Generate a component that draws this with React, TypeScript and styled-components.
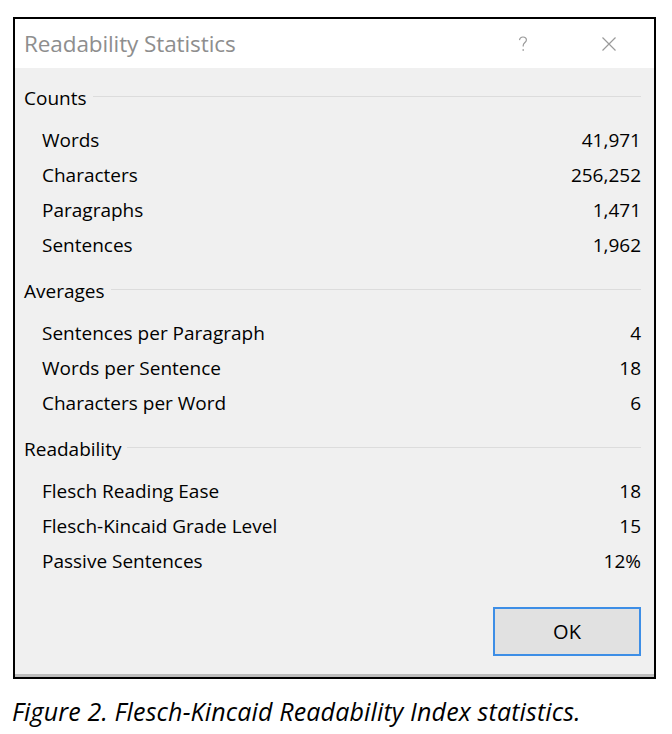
import React from 'react';
import styled, { createGlobalStyle } from 'styled-components';

const GlobalStyle = createGlobalStyle`
  html, body {
    margin: 0;
    padding: 0;
    background: #ffffff;
  }
`;

const Page = styled.div`
  width: 672px;
  height: 734px;
  padding: 17px 0 0 13px;
  box-sizing: border-box;
  font-family: "Open Sans", "Noto Sans", sans-serif;
`;

const Dialog = styled.div`
  width: 643px;
  border: 2px solid #000000;
  box-sizing: border-box;
  background: #f0f0f0;
`;

const TitleBar = styled.div`
  height: 49px;
  display: flex;
  align-items: center;
  padding: 0 0 0 9px;
  background: #ffffff;
`;

const Title = styled.div`
  flex: 1;
  font-size: 22.5px;
  color: #8e8e8e;
  letter-spacing: -0.1px;
`;

const TitleButton = styled.div<{ $w: number }>`
  width: ${(p) => p.$w}px;
  height: 49px;
  display: flex;
  align-items: center;
  justify-content: center;
  color: #9a9a9a;
`;

const Body = styled.div`
  padding: 12px 13px 18px 9px;
  border-bottom: 3px solid #bdbdbd;
  display: flex;
  flex-direction: column;
`;

const Group = styled.section`
  display: flex;
  flex-direction: column;
  margin-bottom: 11px;
`;

const GroupHeader = styled.div`
  display: flex;
  align-items: center;
  height: 35px;
  margin-bottom: 7px;
  font-size: 19px;
  color: #000000;

  &::after {
    content: '';
    flex: 1;
    height: 1px;
    margin-left: 6px;
    margin-top: -3px;
    background: #dcdcdc;
  }
`;

const Row = styled.div`
  display: flex;
  align-items: center;
  justify-content: space-between;
  height: 35px;
  padding-left: 18px;
  font-size: 19px;
  color: #000000;
`;

const Footer = styled.div`
  display: flex;
  justify-content: flex-end;
  margin-top: 18px;
`;

const OkButton = styled.button`
  width: 148px;
  height: 49px;
  border: 2px solid #3d8ee6;
  background: #e1e1e1;
  font-family: "Open Sans", "Noto Sans", sans-serif;
  font-size: 20px;
  color: #000000;
  padding: 0;
`;

const Caption = styled.div`
  margin-top: 15px;
  margin-left: -1px;
  font-family: "Open Sans", "Noto Sans", sans-serif;
  font-style: italic;
  font-size: 25px;
  letter-spacing: 0.15px;
  color: #000000;
`;

const groups = [
  {
    name: 'Counts',
    rows: [
      ['Words', '41,971'],
      ['Characters', '256,252'],
      ['Paragraphs', '1,471'],
      ['Sentences', '1,962'],
    ],
  },
  {
    name: 'Averages',
    rows: [
      ['Sentences per Paragraph', '4'],
      ['Words per Sentence', '18'],
      ['Characters per Word', '6'],
    ],
  },
  {
    name: 'Readability',
    rows: [
      ['Flesch Reading Ease', '18'],
      ['Flesch-Kincaid Grade Level', '15'],
      ['Passive Sentences', '12%'],
    ],
  },
];

export default function App() {
  return (
    <>
      <GlobalStyle />
      <Page>
        <Dialog>
          <TitleBar>
            <Title>Readability Statistics</Title>
            <TitleButton $w={82}>
              <svg width="10" height="16" viewBox="0 0 10 16">
                <path d="M1.5 4.2 C1.8 2 3.3 1 5 1 C7 1 8.4 2.3 8.4 4 C8.4 6.2 5.2 6.8 5.2 9.4 V10.6" fill="none" stroke="#9a9a9a" strokeWidth="1.2" />
                <rect x="4.5" y="13.2" width="1.4" height="1.6" fill="#9a9a9a" />
              </svg>
            </TitleButton>
            <TitleButton $w={90}>
              <svg width="14" height="14" viewBox="0 0 14 14">
                <path d="M0.5 0.5 L13.5 13.5 M13.5 0.5 L0.5 13.5" stroke="#9a9a9a" strokeWidth="1.2" />
              </svg>
            </TitleButton>
          </TitleBar>
          <Body>
            {groups.map((g) => (
              <Group key={g.name}>
                <GroupHeader>{g.name}</GroupHeader>
                {g.rows.map(([label, value]) => (
                  <Row key={label}>
                    <span>{label}</span>
                    <span>{value}</span>
                  </Row>
                ))}
              </Group>
            ))}
            <Footer>
              <OkButton>OK</OkButton>
            </Footer>
          </Body>
        </Dialog>
        <Caption>Figure 2. Flesch-Kincaid Readability Index statistics.</Caption>
      </Page>
    </>
  );
}
